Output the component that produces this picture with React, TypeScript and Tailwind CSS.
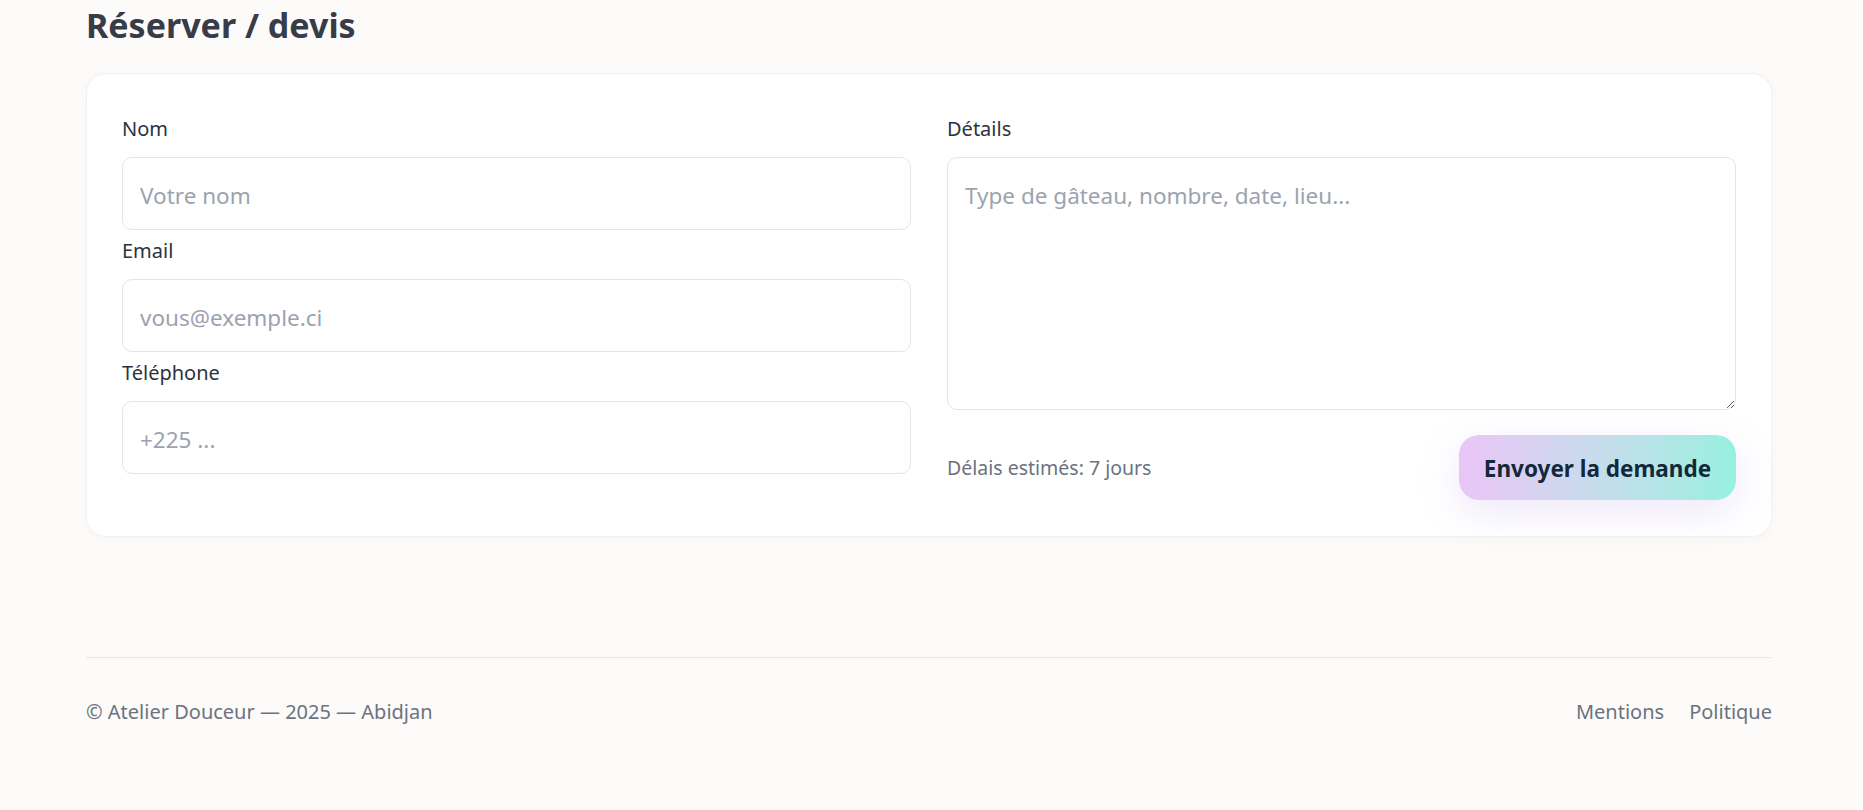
import React from "react";

const Field: React.FC<{ label: string; placeholder: string; type?: string }> = ({
  label,
  placeholder,
  type = "text",
}) => (
  <div className="flex flex-col">
    <label className="mt-[7px] mb-[14px] text-[20px] leading-[28px] text-[#2b3340]">{label}</label>
    <input
      type={type}
      placeholder={placeholder}
      className="h-[73px] w-full rounded-[10px] border border-[#e3e5e9] bg-white px-[17px] pt-[3px] text-[22.5px] text-[#2b3340] placeholder:text-[#9ca3af] outline-none"
    />
  </div>
);

export default function App() {
  return (
    <div className="min-h-[810px] bg-[#fcfbf9] font-['Segoe_UI','Noto_Sans',sans-serif]">
      <main className="pl-[86px] pr-[91px]">
        <h1 className="pt-[6px] text-[34px] leading-[38px] font-bold text-[#383c48]">Réserver / devis</h1>

        <section className="mt-[29px] grid grid-cols-2 gap-x-[36px] rounded-[20px] border border-[#f3f1ed] bg-white px-[35px] pt-[34px] pb-[36px] shadow-[0_2px_10px_rgba(120,100,80,0.03)]">
          <div className="flex flex-col">
            <Field label="Nom" placeholder="Votre nom" />
            <Field label="Email" placeholder="vous@exemple.ci" type="email" />
            <Field label="Téléphone" placeholder="+225 ..." type="tel" />
          </div>

          <div className="flex flex-col">
            <label className="mt-[7px] mb-[14px] text-[20px] leading-[28px] text-[#2b3340]">Détails</label>
            <textarea
              placeholder="Type de gâteau, nombre, date, lieu..."
              className="h-[253px] w-full rounded-[10px] border border-[#e3e5e9] bg-white px-[17px] pt-[21px] pb-[17px] text-[22.5px] leading-[33px] text-[#2b3340] placeholder:text-[#9ca3af] outline-none"
            />
            <div className="mt-[25px] flex items-center justify-between">
              <span className="text-[19.5px] leading-[28px] text-[#6b7280]">Délais estimés: 7 jours</span>
              <button className="h-[65px] w-[277px] rounded-[20px] bg-gradient-to-r from-[#eac5f7] to-[#97f0e0] pt-[2px] text-[22.5px] font-bold text-[#13283a] shadow-[0_12px_40px_rgba(170,140,230,0.2)]">
                Envoyer la demande
              </button>
            </div>
          </div>
        </section>

        <footer className="mt-[120px] flex items-center justify-between border-t border-[#e6e7ea] pt-[40px] text-[20px] leading-[28px] text-[#6b7280]">
          <span>© Atelier Douceur — 2025 — Abidjan</span>
          <nav className="flex gap-[25px]">
            <a href="#">Mentions</a>
            <a href="#">Politique</a>
          </nav>
        </footer>
      </main>
    </div>
  );
}
